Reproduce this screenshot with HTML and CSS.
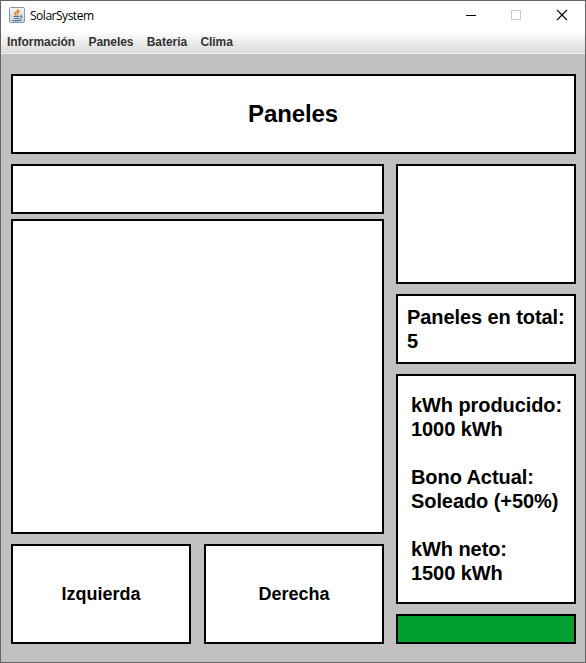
FILE: index.html
```html
<!DOCTYPE html>
<html lang="es">
<head>
<meta charset="utf-8">
<title>SolarSystem</title>
<link rel="stylesheet" href="styles.css">
</head>
<body>
<div class="window">
  <header class="titlebar">
    <svg class="app-icon" width="16" height="16" viewBox="0 0 16 16">
      <defs><linearGradient id="tile" x1="0" y1="0" x2="0" y2="1"><stop offset="0" stop-color="#f6f7f9"/><stop offset="1" stop-color="#c3d2dd"/></linearGradient></defs>
      <rect x=".5" y=".5" width="15" height="15" rx="1" fill="url(#tile)" stroke="#8299aa"/>
      <path d="M9.2 2C9.8 4.2 5 4.8 5.8 6.8L7.2 8.5M11 4C8 5.2 7.8 6 8.8 6.8L8.3 8.4" fill="none" stroke="#e87e24" stroke-width="1.4"/>
      <path d="M4.5 9.5H10.5M5.3 11.5H10M11 9C13.4 8.4 13 10.8 10.9 11.2M3.5 13.2Q8 14.4 12.5 13" fill="none" stroke="#456f94" stroke-width="1.1"/>
    </svg>
    <h1 class="title">SolarSystem</h1>
    <svg class="controls" width="104" height="12" viewBox="0 0 104 12" fill="none" shape-rendering="crispEdges">
      <path d="M0 6.5H10" stroke="#000"/>
      <rect x="45.5" y="1.5" width="9" height="9" stroke="#ccc"/>
      <path d="M91 1L101 11M101 1L91 11" stroke="#000" stroke-width="1.1" shape-rendering="auto"/>
    </svg>
  </header>
  <nav class="menu">
    <span>Información</span><span>Paneles</span><span>Bateria</span><span>Clima</span>
  </nav>
  <main class="content">
    <h2 class="box heading">Paneles</h2>
    <div class="columns">
      <section class="left">
        <div class="box strip"></div>
        <div class="box view"></div>
        <div class="buttons">
          <div class="box button">Izquierda</div>
          <div class="box button">Derecha</div>
        </div>
      </section>
      <aside class="right">
        <div class="box preview"></div>
        <div class="box total">Paneles en total:<br>5</div>
        <div class="box stats">
          <p>kWh producido:<br>1000 kWh</p>
          <p>Bono Actual:<br>Soleado (+50%)</p>
          <p>kWh neto:<br>1500 kWh</p>
        </div>
        <div class="box status"></div>
      </aside>
    </div>
  </main>
</div>
</body>
</html>
```
FILE: styles.css
```css
* { box-sizing: border-box; }
body { margin: 0; font-family: "Liberation Sans", Arial, sans-serif; }
h1, h2, p { margin: 0; }
.window {
  display: flex;
  flex-direction: column;
  width: 586px;
  height: 663px;
  border: 1px solid #636369;
  background: #c0c0c0;
}
.titlebar {
  display: flex;
  align-items: center;
  height: 30px;
  padding: 0 15px 0 8px;
  background: #fff;
}
.app-icon { margin-top: -2px; }
.title {
  margin-left: 5px;
  font: 400 12px/16px "Open Sans", "Noto Sans", sans-serif;
  letter-spacing: -0.48px;
  white-space: nowrap;
}
.controls { margin-left: auto; margin-top: -2px; }
.menu {
  display: flex;
  gap: 13.3px;
  height: 23px;
  padding-left: 6px;
  border-bottom: 1px solid #eee;
  background: linear-gradient(#fff, #dadada);
  color: #333;
  font-size: 12px;
  font-weight: 700;
  letter-spacing: -0.05px;
  line-height: 22px;
}
.content { padding: 20px 9px 0 10px; }
.box { border: 2px solid #000; background: #fff; }
.heading {
  height: 80px;
  padding-right: 1px;
  font-size: 24px;
  letter-spacing: -0.1px;
  line-height: 76px;
  text-align: center;
}
.columns { display: flex; gap: 12px; margin-top: 10px; }
.left { width: 373px; }
.strip { height: 50px; }
.view { height: 315px; margin-top: 5px; }
.buttons { display: flex; justify-content: space-between; margin-top: 10px; }
.button {
  width: 180px;
  height: 100px;
  font-size: 18px;
  font-weight: 700;
  line-height: 96px;
  text-align: center;
}
.right {
  display: flex;
  flex-direction: column;
  gap: 10px;
  width: 180px;
  font-size: 20px;
  font-weight: 700;
  letter-spacing: -0.08px;
  line-height: 24px;
  white-space: nowrap;
}
.preview { height: 120px; }
.total { height: 70px; padding: 9px 0 0 9px; }
.stats {
  display: flex;
  flex-direction: column;
  gap: 24px;
  height: 230px;
  padding: 17px 0 0 13px;
}
.status { height: 30px; background: #00a02f; }
```
